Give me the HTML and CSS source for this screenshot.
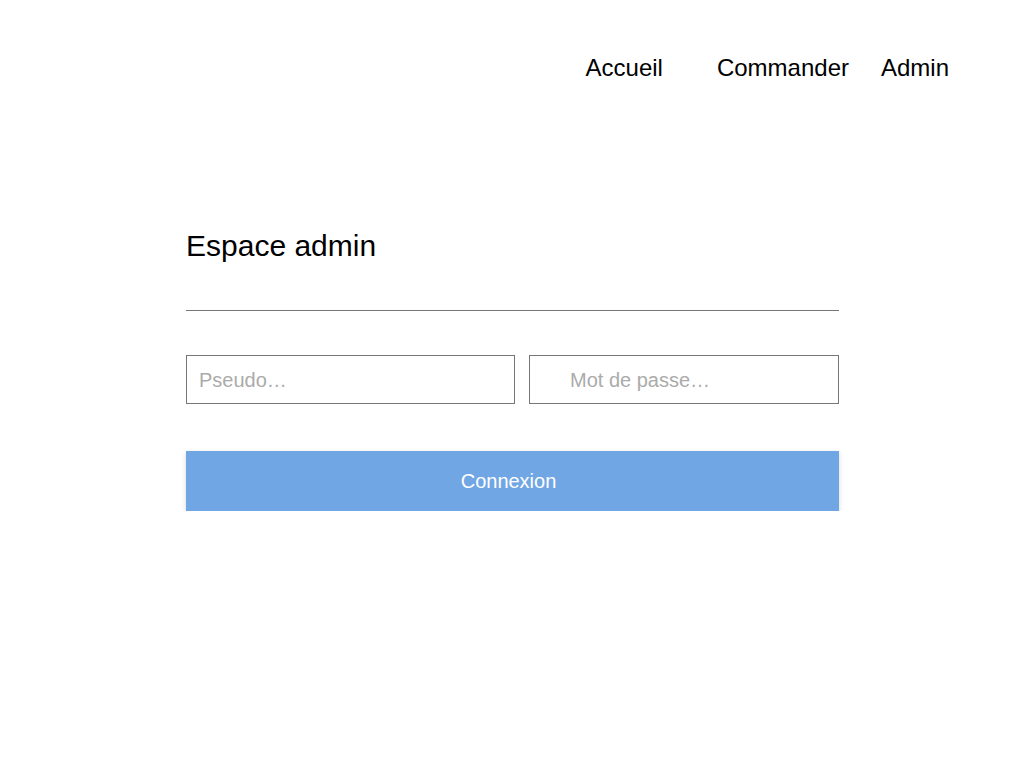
FILE: index.html
```html
<!DOCTYPE html>
<html lang="fr">
<head>
<meta charset="utf-8">
<title>Espace admin</title>
<link rel="stylesheet" href="styles.css">
</head>
<body>
<nav class="nav">
  <a class="nav-link nav-link--first" href="#">Accueil</a>
  <a class="nav-link" href="#">Commander</a>
  <a class="nav-link nav-link--last" href="#">Admin</a>
</nav>
<main class="panel">
  <h1 class="title">Espace admin</h1>
  <hr class="divider">
  <form class="login">
    <div class="fields">
      <input class="field field--user" type="text" placeholder="Pseudo…">
      <input class="field field--pass" type="password" placeholder="Mot de passe…">
    </div>
    <button class="submit" type="button">Connexion</button>
  </form>
</main>
</body>
</html>
```
FILE: styles.css
```css
html, body {
  margin: 0;
  padding: 0;
  background: #ffffff;
}
body {
  font-family: "Liberation Sans", Arial, sans-serif;
  color: #000;
}
.nav {
  display: flex;
  justify-content: flex-end;
  padding: 54px 75px 0 0;
  height: 28px;
}
.nav-link {
  font-size: 24px;
  line-height: 28px;
  color: #000;
  text-decoration: none;
  margin-right: 32px;
}
.nav-link--first {
  margin-right: 54px;
}
.nav-link--last {
  margin-right: 0;
}
.panel {
  width: 653px;
  margin: 0 0 0 186px;
  padding-top: 147px;
}
.title {
  margin: 0;
  font-weight: normal;
  font-size: 30px;
  line-height: 34px;
}
.divider {
  margin: 47px 0 0 0;
  border: 0;
  height: 1px;
  background: #777;
}
.login {
  margin: 44px 0 0 0;
}
.fields {
  display: grid;
  grid-template-columns: 329px 310px;
  column-gap: 14px;
}
.field {
  box-sizing: border-box;
  height: 49px;
  margin: 0;
  border: 1px solid #777;
  border-radius: 0;
  font-family: "Liberation Sans", Arial, sans-serif;
  font-size: 20px;
  color: #333;
  background: #fff;
  outline: none;
}
.field--user {
  padding: 2px 12px 0 12px;
}
.field--pass {
  padding: 2px 12px 0 40px;
}
.field::placeholder {
  color: #ababab;
  opacity: 1;
}
.submit {
  display: block;
  width: 653px;
  height: 60px;
  margin-top: 47px;
  padding: 0 8px 0 0;
  border: 0;
  border-radius: 0;
  background: #71a6e4;
  color: #fff;
  font-family: "Liberation Sans", Arial, sans-serif;
  font-size: 20px;
  box-shadow: 0 2px 5px rgba(0, 0, 0, 0.16);
  cursor: pointer;
}
```
